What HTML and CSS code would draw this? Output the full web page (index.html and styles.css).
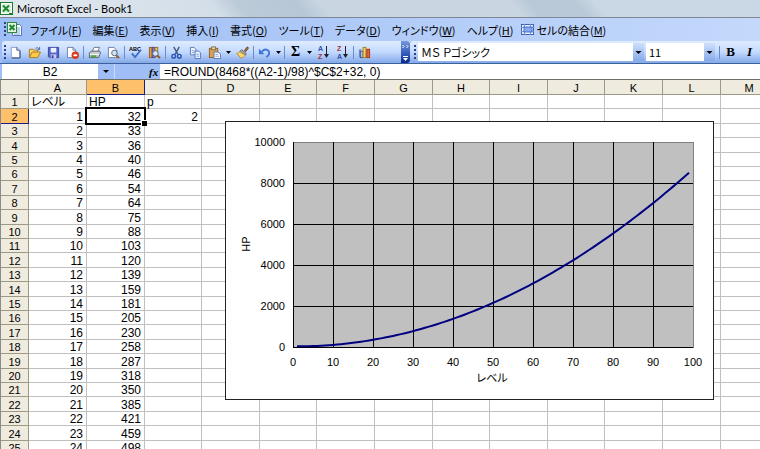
FILE: index.html
```
<!DOCTYPE html>
<html lang="ja">
<head>
  <meta charset="UTF-8">
  <meta name="viewport" content="width=device-width, initial-scale=1.0">
  <title>Microsoft Excel - Book1</title>
  <link rel="stylesheet" href="styles.css">
</head>
<body>

  <header class="titlebar">
    <svg class="app-icon" viewBox="0 0 13 13" width="13" height="13">
      <rect x="0.5" y="0.5" width="12" height="12" fill="#fff" stroke="#1c7a2c"/>
      <rect x="2" y="2" width="9" height="9" fill="#dff0dc"/>
      <path d="M3 3.5l6 6M9 3.5l-6 6" stroke="#1c8a30" stroke-width="2"/>
      <path d="M9 11h3v1H9z" fill="#1c7a2c"/>
    </svg>
    <h1>Microsoft Excel - Book1</h1>
  </header>

  <nav class="menubar">
    <span class="grip"></span>
    <svg class="book-icon" viewBox="0 0 16 15" width="16" height="15">
      <path d="M5.5 2.5h7l2 2v9h-9z" fill="#fff" stroke="#5877b8"/>
      <path d="M9 6h4M9 8h4M9 10h4M7 12h6" stroke="#8aa4dc"/>
      <rect x="0.5" y="0.5" width="9" height="10" fill="#e6f3e2" stroke="#2d8a3a"/>
      <path d="M2.5 3l5 5M7.5 3l-5 5" stroke="#1c8a30" stroke-width="2"/>
    </svg>
    <a href="#">ファイル(<u>F</u>)</a>
    <a href="#">編集(<u>E</u>)</a>
    <a href="#">表示(<u>V</u>)</a>
    <a href="#">挿入(<u>I</u>)</a>
    <a href="#">書式(<u>O</u>)</a>
    <a href="#">ツール(<u>T</u>)</a>
    <a href="#">データ(<u>D</u>)</a>
    <a href="#">ウィンドウ(<u>W</u>)</a>
    <a href="#">ヘルプ(<u>H</u>)</a>
    <a href="#" class="with-icon">
      <svg viewBox="0 0 13 11" width="13" height="11">
        <rect x="0.5" y="0.5" width="12" height="10" fill="#eef4ff" stroke="#3c62b4"/>
        <path d="M0 3.5h13M0 7.5h13M3.5 0v11M9.500 0v3M9.500 8v3" stroke="#6f90d4"/>
        <rect x="3" y="3" width="8" height="5" fill="#86aaf0" stroke="#4a70c8"/>
      </svg>
      セルの結合(<u>M</u>)
    </a>
  </nav>

  <div class="toolbars">
    <div class="toolbar standard">
      <span class="grip"></span>
      <button aria-label="新規作成"><svg viewBox="0 0 14 14">
        <path d="M2.500 1.500h6l3 3v8h-9z" fill="#fff" stroke="#8a9cc8"/><path d="M8.500 1.500v3h3" fill="#dce6fa" stroke="#3c4c78"/><path d="M3 13h9V5" fill="none" stroke="#3c4c78"/>
      </svg></button>
      <button aria-label="開く"><svg viewBox="0 0 14 14">
        <path d="M1.500 12V3.500h4l1 1h4V7" fill="#f7d774" stroke="#a87a1c"/><path d="M1.500 12.500l3-6h9l-3 6z" fill="#ffc84a" stroke="#a87a1c"/><path d="M8 2.500q3-2 4 1M12.500 1v3h-2.500" fill="none" stroke="#4a6aa8"/>
      </svg></button>
      <button aria-label="上書き保存"><svg viewBox="0 0 14 14">
        <path d="M1.500 1.500h11v11h-10l-1-1z" fill="#5468cc" stroke="#38409c"/><rect x="4" y="2" width="6" height="5" fill="#eef2ff"/><rect x="4" y="9" width="6" height="4" fill="#c8cce8"/><rect x="5" y="10" width="2" height="3" fill="#38409c"/>
      </svg></button>
      <button aria-label="アクセス許可"><svg viewBox="0 0 14 14">
        <path d="M1.500 1.500h6l3 3v8h-9z" fill="#fff" stroke="#6a7ca8"/><path d="M7.500 1.500v3h3" fill="none" stroke="#6a7ca8"/><circle cx="10" cy="10" r="4" fill="#d83a1c"/><path d="M8 10h4" stroke="#fff" stroke-width="2"/>
      </svg></button>
      <span class="sep"></span>
      <button aria-label="印刷"><svg viewBox="0 0 14 14">
        <path d="M4.500 6l2-4.500h6L10.500 6z" fill="#fff" stroke="#6c7484"/><path d="M1.500 7.500l2-2h9l1 2-2 5h-10z" fill="#c4c8d0" stroke="#565e6c"/><path d="M2 9h10" stroke="#fff"/><path d="M3 11h6" stroke="#4cac3c" stroke-width="2"/>
      </svg></button>
      <button aria-label="印刷プレビュー"><svg viewBox="0 0 14 14">
        <path d="M1.500 1.500h6l3 3v8h-9z" fill="#fff" stroke="#6a7ca8"/><circle cx="8" cy="7.500" r="3" fill="#cde4f4" stroke="#5a6474"/><path d="M10 10l3 3" stroke="#8a5a28" stroke-width="2"/>
      </svg></button>
      <span class="sep"></span>
      <button aria-label="スペルチェック"><svg viewBox="0 0 14 14">
        <text x="0" y="5" class="icon-abc">ABC</text><path d="M3 8l3.500 4L13 4" fill="none" stroke="#3c70cc" stroke-width="2"/>
      </svg></button>
      <button aria-label="リサーチ"><svg viewBox="0 0 14 14">
        <rect x="1.500" y="1.500" width="3" height="11" fill="#e8a03c" stroke="#94601c"/><rect x="4.500" y="1.500" width="3" height="11" fill="#8474cc" stroke="#50409c"/><rect x="7.500" y="1.500" width="3" height="10" fill="#f0c860" stroke="#94701c"/><circle cx="8" cy="8" r="3" fill="#d4e8f8" stroke="#5a6484"/><path d="M10 10l3 3" stroke="#8a5a28" stroke-width="2"/>
      </svg></button>
      <span class="sep"></span>
      <button aria-label="切り取り"><svg viewBox="0 0 14 14">
        <path d="M4 1l4.500 8M10 1L5.500 9" stroke="#44587c" stroke-width="1.500"/><circle cx="4" cy="11" r="2" fill="none" stroke="#2850b4" stroke-width="1.500"/><circle cx="10" cy="11" r="2" fill="none" stroke="#2850b4" stroke-width="1.500"/>
      </svg></button>
      <button aria-label="コピー"><svg viewBox="0 0 14 14">
        <path d="M1.500 1.500h4l2 2v6h-6z" fill="#eef4ff" stroke="#5674b8"/><path d="M3 5h3M3 7h3" stroke="#86a0dc"/><path d="M6.500 5.500h4l2 2v6h-6z" fill="#eef4ff" stroke="#5674b8"/><path d="M8 9h3M8 11h3" stroke="#86a0dc"/>
      </svg></button>
      <button aria-label="貼り付け"><svg viewBox="0 0 14 14">
        <rect x="1.500" y="2.500" width="9" height="10" fill="#d8a050" stroke="#8c6024"/><rect x="4" y="1" width="4" height="3" fill="#e8dcb4" stroke="#7c6c44"/><path d="M6.500 6.500h4l3 2v5h-7z" fill="#fff" stroke="#5674b8"/><path d="M8 9h3M8 11h4" stroke="#86a0dc"/>
      </svg></button>
      <button class="drop" aria-label="貼り付けオプション"><svg viewBox="0 0 5 3"><path d="M0 0h5L2.500 3z"/></svg></button>
      <button aria-label="書式のコピー"><svg viewBox="0 0 14 14">
        <path d="M9 5l3-4 1.500 1-3 4z" fill="#9a7448" stroke="#684c28"/><path d="M6 4l5 4-1 2-6-4z" fill="#a0a4ac" stroke="#686c78"/><path d="M4 6l6 4q-2 3-5 3L1 8q2 0 3-2z" fill="#fcd870" stroke="#b48c30"/>
      </svg></button>
      <span class="sep"></span>
      <button aria-label="元に戻す"><svg viewBox="0 0 14 14">
        <path d="M1 3v6h6z" fill="#3c74dc"/><path d="M4 6q4-4 7-1t-2 7" fill="none" stroke="#3c74dc" stroke-width="2"/>
      </svg></button>
      <button class="drop" aria-label="元に戻す履歴"><svg viewBox="0 0 5 3"><path d="M0 0h5L2.500 3z"/></svg></button>
      <span class="sep"></span>
      <button class="sigma" aria-label="オートSUM">Σ</button>
      <button class="drop" aria-label="関数の選択"><svg viewBox="0 0 5 3"><path d="M0 0h5L2.500 3z"/></svg></button>
      <button class="sort" aria-label="昇順で並べ替え"><svg viewBox="0 0 13 18">
        <text x="1" y="8" class="icon-az" fill="#2c50b4">A</text><text x="1" y="16" class="icon-az" fill="#a83434">Z</text><path d="M9.500 3v10" stroke="#222"/><path d="M7 11h5l-2.500 4z" fill="#222"/>
      </svg></button>
      <button class="sort" aria-label="降順で並べ替え"><svg viewBox="0 0 13 18">
        <text x="1" y="8" class="icon-az" fill="#a83434">Z</text><text x="1" y="16" class="icon-az" fill="#2c50b4">A</text><path d="M9.500 3v10" stroke="#222"/><path d="M7 11h5l-2.500 4z" fill="#222"/>
      </svg></button>
      <span class="sep"></span>
      <button aria-label="グラフ ウィザード"><svg viewBox="0 0 14 14">
        <path d="M1 4l2-1v9H1z" fill="#7c8cb0"/><rect x="2.500" y="5.500" width="3" height="7" fill="#a8c4f4" stroke="#3454a4"/><rect x="5.500" y="1.500" width="3" height="11" fill="#fcd458" stroke="#a47c1c"/><rect x="9.500" y="3.500" width="3" height="9" fill="#e86438" stroke="#a0341c"/>
      </svg></button>
      <button class="overflow" aria-label="ツール バーのオプション"><svg viewBox="0 0 9 22">
        <path d="M1.500 4l1.500 1.500L1.500 7M5.500 4l1.500 1.500L5.500 7" fill="none" stroke="#fff"/><path d="M2 15.500h5" stroke="#fff"/><path d="M2 17h5l-2.500 3z" fill="#fff"/>
      </svg></button>
    </div>

    <div class="toolbar formatting">
      <span class="grip"></span>
      <label class="combo font-name">
        <select aria-label="フォント"><option>ＭＳ Ｐゴシック</option></select>
        <svg viewBox="0 0 10 18"><path d="M2 8h6l-3 3z"/></svg>
      </label>
      <label class="combo font-size">
        <select aria-label="フォント サイズ"><option>11</option></select>
        <svg viewBox="0 0 10 18"><path d="M2 8h6l-3 3z"/></svg>
      </label>
      <span class="sep"></span>
      <button class="bold" aria-label="太字">B</button>
      <button class="italic" aria-label="斜体">I</button>
    </div>
  </div>

  <div class="formula-bar">
    <input class="name-box" type="text" aria-label="名前ボックス" value="B2">
    <button class="name-drop" aria-label="名前の一覧"><svg viewBox="0 0 6 3" width="6" height="3"><path d="M0 0h6L3 3z"/></svg></button>
    <button class="fx" aria-label="関数の挿入">fx</button>
    <input class="formula" type="text" aria-label="数式バー" value="=ROUND(8468*((A2-1)/98)^$C$2+32, 0)">
  </div>

  <main class="sheet" id="sheet">
    <table class="grid">
      <thead><tr id="columns"><th class="corner"></th></tr></thead>
      <tbody id="rows"></tbody>
    </table>
    <div class="chart">
      <svg id="chart" viewBox="0 0 487 277" width="487" height="277" role="img" aria-label="レベルとHPのグラフ"></svg>
    </div>
  </main>

  <script src="script.js"></script>
</body>
</html>
```
FILE: styles.css
```
* {
  box-sizing: border-box;
}

body {
  margin: 0;
  height: 100vh;
  display: flex;
  flex-direction: column;
  overflow: hidden;
  background: #9ebef5;
  color: #000;
  font-family: "Liberation Sans", "Noto Sans CJK JP", sans-serif;
  font-size: 12px;
  font-feature-settings: "palt";
}

button,
input,
select {
  margin: 0;
  padding: 0;
  border: none;
  border-radius: 0;
  background: none;
  color: inherit;
  font: inherit;
  font-feature-settings: inherit;
}

/* title bar */
.titlebar {
  flex: none;
  display: flex;
  align-items: center;
  gap: 4px;
  height: 18px;
  border-bottom: 1px solid #7f8794;
  background: linear-gradient(50deg, #e3e9ef 0, #d3dee8 170px, #bccbd8 190px, #b7c7d6 235px, #c9d6e2 255px, #c9d6e2 400px, #b9c9d7 415px, #b9c9d7 450px, #cad7e4 465px);
}

.titlebar h1 {
  margin: 0;
  font-family: Lato, sans-serif;
  font-size: 11px;
  line-height: 16px;
  font-weight: normal;
}

/* menu */
.menubar {
  flex: none;
  display: flex;
  align-items: center;
  gap: 11px;
  height: 23px;
  padding-left: 4px;
  background: linear-gradient(90deg, #9ebef5, #c4d8fb);
  font-family: "Noto Sans CJK JP", sans-serif;
  font-size: 11px;
  line-height: 16px;
  white-space: nowrap;
}

.menubar a {
  color: #000;
  text-decoration: none;
}

.menubar .book-icon {
  margin: 0 -4px 0 -10px;
}

.menubar .with-icon {
  display: flex;
  align-items: center;
  margin-left: -4px;
}

.with-icon svg {
  margin-right: 3px;
}

.grip {
  flex: none;
  width: 2px;
  height: 15px;
  background: repeating-linear-gradient(#27418e 0 2px, transparent 2px 4px);
}

/* toolbars */
.toolbars {
  flex: none;
  display: flex;
  height: 23px;
  padding-left: 2px;
  border-bottom: 1px solid #3b619c;
  background: #9ebef5;
}

.toolbar {
  display: flex;
  align-items: center;
  height: 22px;
  padding-left: 2px;
  border-radius: 3px 0 0 3px;
  background: linear-gradient(#dfecff, #c3daff 50%, #84a9e8);
}

.standard {
  width: 408px;
}

.formatting {
  flex: 1;
  padding-left: 4px;
}

.toolbar button {
  flex: none;
  display: flex;
  align-items: center;
  justify-content: center;
  width: 19px;
  height: 20px;
}

.toolbar button svg {
  width: 13px;
  height: 13px;
}

.toolbar .drop {
  width: 9px;
}

.toolbar .drop svg {
  width: 5px;
  height: 3px;
}

.toolbar .sort svg {
  height: 18px;
}

.toolbar .sep {
  flex: none;
  width: 1px;
  height: 13px;
  margin: 0 1px;
  background: #6a8ccb;
}

.icon-abc {
  font-size: 6px;
  font-weight: bold;
}

.icon-az {
  font-size: 7px;
  font-weight: bold;
}

.toolbar .sigma {
  font-family: "Liberation Serif", serif;
  font-size: 14px;
  font-weight: bold;
}

.toolbar .overflow {
  width: 9px;
  height: 22px;
  margin-left: auto;
  border-radius: 0 3px 3px 0;
  background: linear-gradient(#7597dd, #3a61bd 50%, #0a2b8c);
}

.toolbar .overflow svg {
  width: 9px;
  height: 22px;
}

.combo {
  display: flex;
  height: 18px;
  margin-left: 2px;
  background: #fff;
}

.combo select {
  flex: 1;
  min-width: 0;
  padding-left: 3px;
  appearance: none;
  font-family: "Noto Sans CJK JP", sans-serif;
  font-size: 11px;
}

.combo svg {
  width: 11px;
  height: 18px;
  background: linear-gradient(#cfe0fc, #86aae8);
}

.font-name {
  width: 226px;
}

.font-size {
  width: 69px;
  margin-right: 3px;
}

.toolbar .bold,
.toolbar .italic {
  font-family: "Liberation Serif", serif;
  font-size: 13px;
  font-weight: bold;
}

.toolbar .italic {
  font-style: italic;
}

/* formula bar */
.formula-bar {
  flex: none;
  display: flex;
  height: 16px;
  padding-left: 2px;
  border-bottom: 1px solid #6e6c64;
  background: #9ebef5;
}

.formula-bar .name-box {
  width: 96px;
  background: #fff;
  text-align: center;
}

.name-drop {
  display: flex;
  align-items: center;
  justify-content: center;
  width: 17px;
  border-right: 1px solid #c9dcfb;
}

.fx {
  width: 45px;
  padding-left: 34px;
  text-align: left;
  font-family: "Liberation Serif", serif;
  font-size: 11px;
  line-height: 14px;
  font-style: italic;
  font-weight: bold;
}

.formula-bar .formula {
  flex: 1;
  min-width: 0;
  padding-left: 4px;
  background: #fff;
}

/* sheet */
.sheet {
  flex: 1;
  position: relative;
  min-height: 0;
  overflow: hidden;
  border-left: 1px solid #8c8c8c;
  background: #fff;
}

.grid {
  width: 0;
  table-layout: fixed;
  border-collapse: separate;
  border-spacing: 0;
}

.grid th,
.grid td {
  width: 58px;
  height: 14px;
  padding: 2px 2px 0;
  border: solid #c0c0c0;
  border-width: 0 1px 1px 0;
  line-height: 11px;
  white-space: nowrap;
}

.grid th:nth-child(5n + 4),
.grid th:nth-child(5n + 6) {
  width: 57px;
}

.grid tbody tr:nth-child(5n + 2) > *,
.grid tbody tr:nth-child(5n + 4) > * {
  height: 15px;
  line-height: 12px;
}

.grid td {
  text-align: left;
}

.grid .number {
  padding-right: 3px;
  text-align: right;
}

.grid th {
  border-color: #9c9a84;
  background: #efebde;
  font-size: 11px;
  font-weight: normal;
}

.grid thead th {
  height: 15px;
  line-height: 12px;
}

.grid thead .corner,
.grid tbody th {
  width: 28px;
}

.grid .selected {
  border-color: #1c1c84;
  background: #ffc06c;
}

.grid .active {
  position: relative;
}

.active::before {
  content: "";
  position: absolute;
  inset: -2px;
  border: 2px solid #000;
}

.active::after {
  content: "";
  position: absolute;
  right: -3px;
  bottom: -3px;
  width: 5px;
  height: 5px;
  border: solid #fff;
  border-width: 1px 0 0 1px;
  background: #000;
}

/* chart floating over the cells */
.chart {
  position: absolute;
  left: 224px;
  top: 41px;
  border: 1px solid #222;
  background: #fff;
}

.chart svg {
  display: block;
}

.plot {
  fill: #c0c0c0;
  stroke: #808080;
  shape-rendering: crispEdges;
}

.gridline {
  stroke: #000;
  shape-rendering: crispEdges;
}

.curve {
  fill: none;
  stroke: #000080;
  stroke-width: 2;
}

.chart text {
  font-size: 11px;
}

.middle {
  text-anchor: middle;
}

.end {
  text-anchor: end;
}
```
FILE: script.js
```
const power = 2;

function hp(level) {
  return Math.round(8468 * Math.pow((level - 1) / 98, power) + 32);
}

// as many cells as the window shows
const sheet = document.getElementById("sheet");
const columnCount = Math.min(26, Math.ceil((sheet.clientWidth - 28) / 57.6));
const rowCount = Math.ceil((sheet.clientHeight - 15) / 14.4);
const columns = "ABCDEFGHIJKLMNOPQRSTUVWXYZ".slice(0, columnCount).split("");

function cellValue(column, row) {
  if (row === 1) {
    return { A: "レベル", B: "HP", C: "p" }[column] || "";
  }
  if (column === "A") return row - 1;
  if (column === "B") return hp(row - 1);
  if (column === "C" && row === 2) return power;
  return "";
}

const head = document.getElementById("columns");
columns.forEach(column => {
  const th = document.createElement("th");
  th.textContent = column;
  if (column === "B") th.className = "selected";
  head.appendChild(th);
});

const body = document.getElementById("rows");
for (let row = 1; row <= rowCount; row++) {
  const tr = document.createElement("tr");
  const th = document.createElement("th");
  th.textContent = row;
  if (row === 2) th.className = "selected";
  tr.appendChild(th);
  columns.forEach(column => {
    const td = document.createElement("td");
    const value = cellValue(column, row);
    td.textContent = value;
    if (typeof value === "number") td.classList.add("number");
    if (column === "B" && row === 2) td.classList.add("active");
    tr.appendChild(td);
  });
  body.appendChild(tr);
}

// chart
const plot = { left: 67, top: 20, width: 400, height: 205 };
const bottom = plot.top + plot.height;
const x = level => plot.left + level * plot.width / 100;
const y = value => bottom - value * plot.height / 10000;

let svg = `<rect class="plot" x="${plot.left}" y="${plot.top}" width="${plot.width}" height="${plot.height}"/>`;

for (let level = 0; level <= 100; level += 10) {
  if (level < 100) {
    svg += `<line class="gridline" x1="${x(level)}" y1="${plot.top}" x2="${x(level)}" y2="${bottom}"/>`;
  }
  svg += `<text class="middle" x="${x(level)}" y="${bottom + 19}">${level}</text>`;
}
for (let value = 0; value <= 10000; value += 2000) {
  if (value < 10000) {
    svg += `<line class="gridline" x1="${plot.left}" y1="${y(value)}" x2="${plot.left + plot.width}" y2="${y(value)}"/>`;
  }
  svg += `<text class="end" x="${plot.left - 8}" y="${y(value) + 4}">${value}</text>`;
}

const points = [];
for (let level = 1; level <= 99; level++) {
  points.push(x(level) + "," + y(hp(level)));
}
svg += `<polyline class="curve" points="${points.join(" ")}"/>`;
svg += `<text class="middle" x="266" y="260">レベル</text>`;
svg += `<text class="middle" transform="translate(24 122) rotate(-90)">HP</text>`;

document.getElementById("chart").innerHTML = svg;
```
